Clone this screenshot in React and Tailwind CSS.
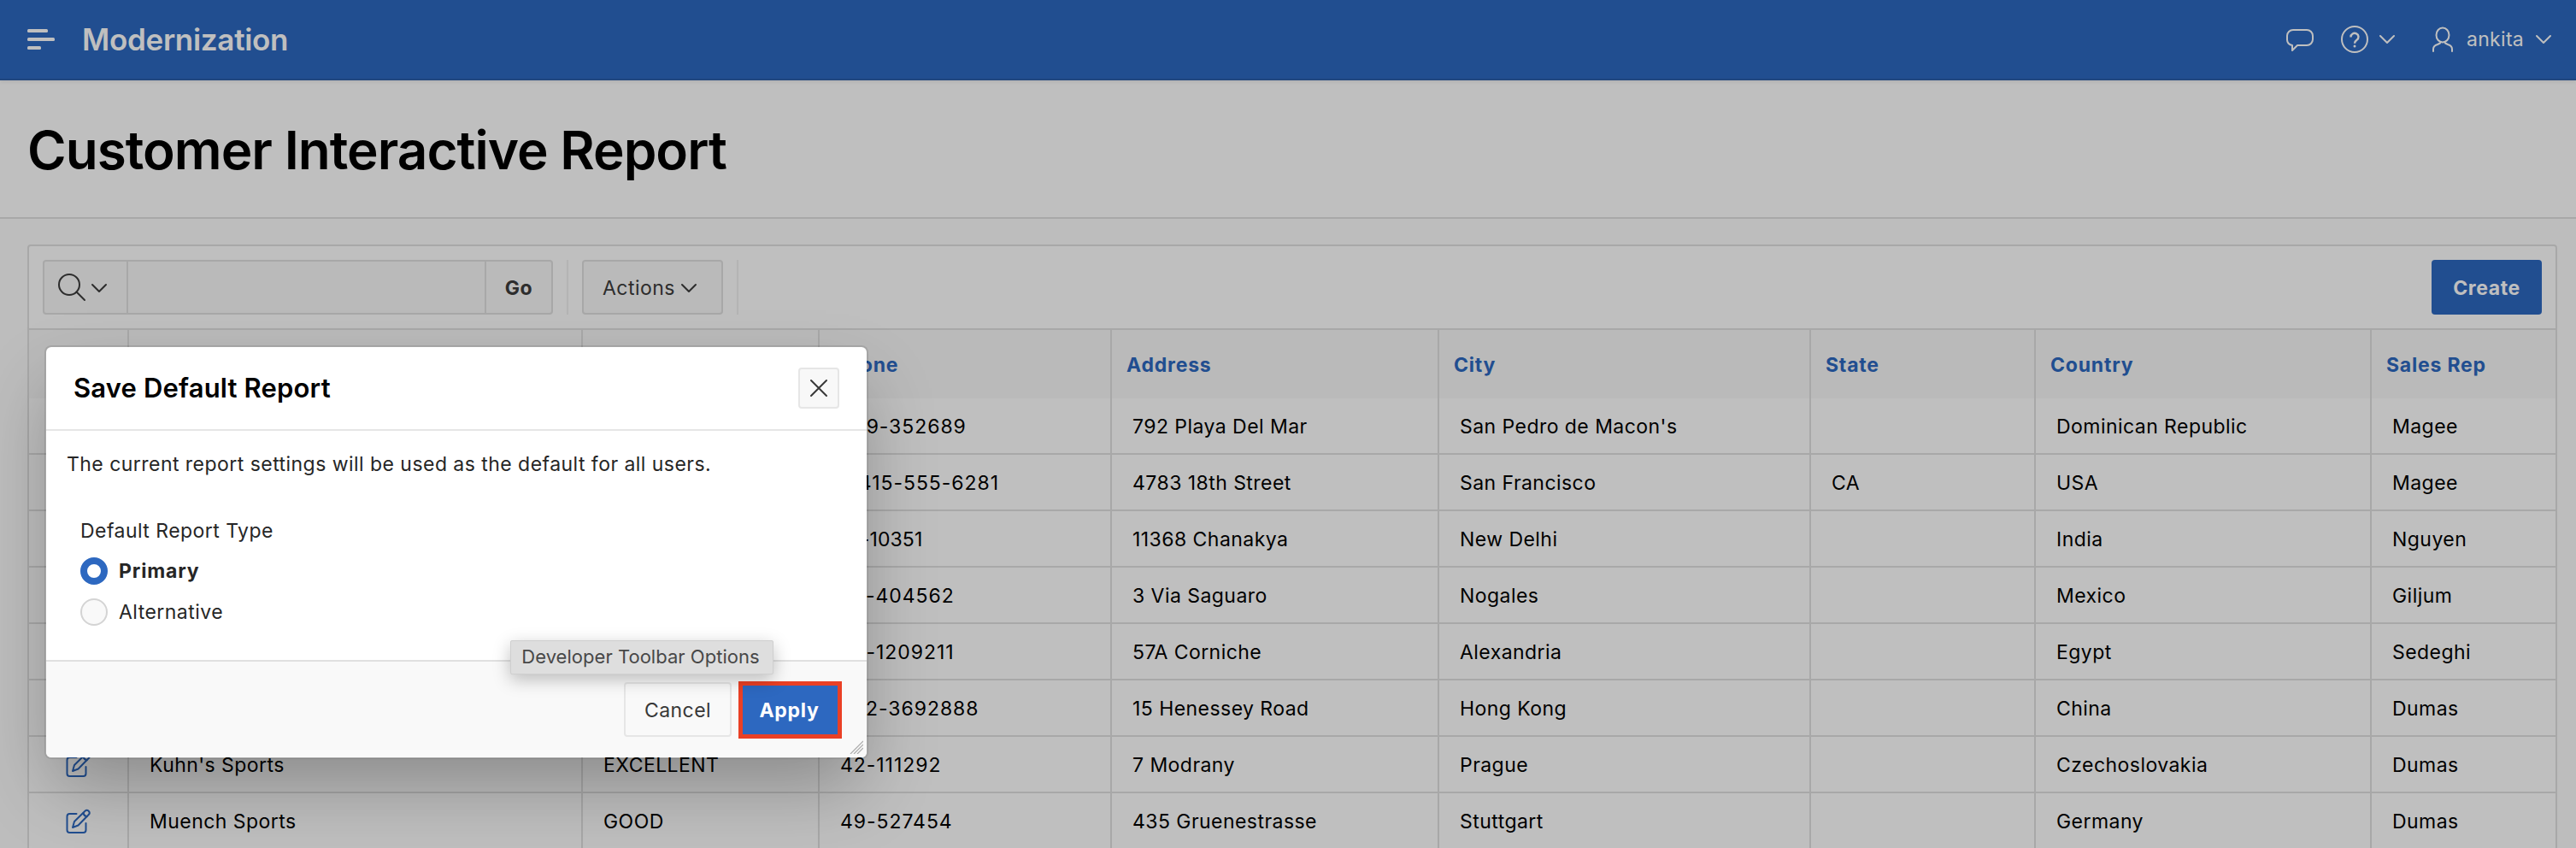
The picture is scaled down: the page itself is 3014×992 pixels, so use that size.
import React from "react";

const COLS = "grid grid-cols-[117px_531px_277px_342px_383px_435px_263px_393px_215px]";
const HEADS = ["", "", "", "Phone", "Address", "City", "State", "Country", "Sales Rep"];
const ROWS = [
  ["", "", "809-352689", "792 Playa Del Mar", "San Pedro de Macon's", "", "Dominican Republic", "Magee"],
  ["", "", "1-415-555-6281", "4783 18th Street", "San Francisco", "CA", "USA", "Magee"],
  ["", "", "91-10351", "11368 Chanakya", "New Delhi", "", "India", "Nguyen"],
  ["", "", "52-404562", "3 Via Saguaro", "Nogales", "", "Mexico", "Giljum"],
  ["", "", "20-1209211", "57A Corniche", "Alexandria", "", "Egypt", "Sedeghi"],
  ["", "", "852-3692888", "15 Henessey Road", "Hong Kong", "", "China", "Dumas"],
  ["Kuhn's Sports", "EXCELLENT", "42-111292", "7 Modrany", "Prague", "", "Czechoslovakia", "Dumas"],
  ["Muench Sports", "GOOD", "49-527454", "435 Gruenestrasse", "Stuttgart", "", "Germany", "Dumas"],
];

function tracking(row, col) {
  if (col !== 2) return "tracking-[0.45px]";
  return row === 2 ? "tracking-[0.1px]" : "tracking-[0.95px]";
}

function Chevron({ className }) {
  return (
    <svg className={className} width="20" height="12" viewBox="0 0 20 12" fill="none" stroke="currentColor" strokeWidth="2" strokeLinecap="round" strokeLinejoin="round">
      <path d="M2 2l8 8 8-8" />
    </svg>
  );
}

function EditIcon() {
  return (
    <svg width="32" height="32" viewBox="0 0 32 32" fill="none" stroke="currentColor" strokeWidth="2" strokeLinecap="round" strokeLinejoin="round">
      <path d="M14.500 7H6.500a3 3 0 0 0-3 3v16a3 3 0 0 0 3 3h16a3 3 0 0 0 3-3v-8" />
      <path d="M10 23l2-7L24.500 3.800a2.900 2.900 0 0 1 4.200 4.200L16.500 20.500z" />
      <path d="M22.500 6c.5 2.500 1.800 3.800 4.200 4.200" />
    </svg>
  );
}

export default function App() {
  return (
    <div className="relative h-[992px] w-[3014px] overflow-hidden bg-[#fdfdfd] font-['Inter',sans-serif] text-[23px] text-black">
      <header className="relative flex h-[94px] items-center border-b-2 border-[#2b5ea9] bg-[#2d68c0] text-white shadow-[0_2px_4px_rgba(0,0,0,0.08)]">
        <svg className="ml-8 shrink-0" width="32" height="24" viewBox="0 0 32 24" fill="currentColor">
          <rect width="24" height="4" rx="1.500" />
          <rect y="10" width="32" height="4" rx="1.500" />
          <rect y="20" width="16" height="4" rx="1.500" />
        </svg>
        <span className="ml-8 text-[35px] font-semibold leading-none tracking-[-0.3px]">Modernization</span>
        <div className="ml-auto flex items-center pr-[28px]">
          <svg width="34" height="28" viewBox="0 0 34 28" fill="none" stroke="currentColor" strokeWidth="2" strokeLinejoin="round">
            <path d="M9 3h16a7 7 0 0 1 7 7v4a7 7 0 0 1-7 7H14l-6 6v-6a6.500 6.500 0 0 1-6-7v-4a7 7 0 0 1 7-7z" />
          </svg>
          <svg className="ml-[30px]" width="34" height="34" viewBox="0 0 34 34" fill="none" stroke="currentColor" strokeWidth="2">
            <circle cx="17" cy="17" r="15" />
            <path d="M12.500 14.500v-.3a4.500 4.300 0 1 1 7 3.500c-1.700 1.200-2.500 1.800-2.500 4" strokeWidth="2.400" />
            <circle cx="17" cy="25" r="1.500" fill="currentColor" stroke="none" />
          </svg>
          <Chevron className="ml-[11px]" />
          <svg className="ml-[42px]" width="26" height="30" viewBox="0 0 26 30" fill="none" stroke="currentColor" strokeWidth="2" strokeLinecap="round">
            <ellipse cx="13" cy="10" rx="7.500" ry="8.500" />
            <path d="M2 29v-2.500c0-3 2-4.500 5-5.500l3-1.500M24 29v-2.500c0-3-2-4.500-5-5.500l-3-1.500" />
          </svg>
          <span className="ml-[15px] w-[67px] pt-px tracking-[0.3px]">ankita</span>
          <Chevron className="ml-[13px]" />
        </div>
      </header>

      <div className="flex h-[162px] items-center border-b-2 border-[#e0e0e0] bg-white pl-8 pt-[3px]">
        <h1 className="text-[62px] font-semibold leading-none tracking-[-0.98px]">Customer Interactive Report</h1>
      </div>

      <section className="ml-8 mt-[30px] h-[760px] w-[2960px] rounded-[4px] border-2 border-[#e0e0e0] bg-white">
        <div className="flex h-[98px] items-center border-b-2 border-[#e0e0e0] px-4 text-[#3c3c3c]">
          <div className="flex h-16 w-[597px] rounded-[4px] border-2 border-[#e0e0e0] bg-[#f8f8f8]">
            <div className="flex w-[98px] items-center border-r-2 border-[#e0e0e0] pl-4">
              <svg width="34" height="34" viewBox="0 0 34 34" fill="none" stroke="currentColor" strokeWidth="2" strokeLinecap="round">
                <circle cx="13" cy="14" r="12" />
                <path d="M21.500 22.500l9.500 9.500" />
              </svg>
              <Chevron className="ml-1 mt-[2px]" />
            </div>
            <div className="w-[419px] border-r-2 border-[#e0e0e0]" />
            <div className="flex flex-1 items-center justify-center pt-[2px] font-bold tracking-[0.5px]">Go</div>
          </div>
          <div className="ml-[16px] h-16 w-[2px] bg-[#f0f0f0]" />
          <div className="ml-[16px] flex h-16 w-[165px] items-center rounded-[4px] border-2 border-[#e0e0e0] bg-[#f8f8f8] pl-[22px]">
            <span className="w-[84px] pt-[2px] tracking-[0.45px]">Actions</span>
            <Chevron className="ml-[7px] mt-[2px]" />
          </div>
          <div className="ml-[16px] h-16 w-[2px] bg-[#f0f0f0]" />
          <div className="ml-auto flex h-16 w-[129px] items-center justify-center rounded-[4px] bg-[#2d68c0] pt-[2px] font-bold tracking-[0.6px] text-white">Create</div>
        </div>
        <div className={COLS + " h-20 bg-[#f8f8f8] font-bold tracking-[0.8px] text-[#2d68c0]"}>
          {HEADS.map((h, i) => (
            <div key={i} className="flex items-center border-r-2 border-[#e0e0e0] pl-[17px] pt-[2px] last:border-r-0">{h}</div>
          ))}
        </div>
        {ROWS.map((r, i) => (
          <div key={i} className={COLS + " h-[66px] border-b-2 border-[#e0e0e0]"}>
            <div className="flex items-center border-r-2 border-[#e0e0e0] pl-[41px] pt-px text-[#2d68c0]"><EditIcon /></div>
            {r.map((c, j) => (
              <div key={j} className={"flex items-center whitespace-nowrap border-r-2 border-[#e0e0e0] pl-6 pt-[2px] last:border-r-0 " + tracking(i, j)}>{c}</div>
            ))}
          </div>
        ))}
      </section>

      <div className="absolute inset-0 bg-black/25" />

      <div className="absolute left-[52px] top-[404px] flex h-[484px] w-[964px] flex-col rounded-[8px] border-2 border-black/10 bg-white bg-clip-padding tracking-[0.46px] text-[#262626] shadow-[0_40px_80px_-10px_rgba(0,0,0,0.28)]">
        <div className="flex h-[98px] items-center justify-between border-b-2 border-[#e6e6e6] pl-8 pr-8">
          <h2 className="pt-px text-[31px] font-semibold tracking-[0.16px] text-black">Save Default Report</h2>
          <div className="flex h-12 w-12 items-center justify-center rounded-[4px] border-2 border-[#e6e6e6] bg-[#f8f8f8]">
            <svg width="22" height="22" viewBox="0 0 22 22" stroke="#383838" strokeWidth="2" strokeLinecap="round">
              <path d="M2 2l18 18M20 2L2 20" />
            </svg>
          </div>
        </div>
        <div className="flex h-[268px] flex-col pt-[21px]">
          <p className="pl-6 leading-9">The current report settings will be used as the default for all users.</p>
          <p className="mt-[42px] pl-10 leading-9">Default Report Type</p>
          <div className="mt-[5px] flex h-12 items-center pl-10 font-bold tracking-[0.85px]">
            <span className="h-8 w-8 rounded-full border-8 border-[#2d68c0] bg-white" />
            <span className="ml-[13px] pt-px">Primary</span>
          </div>
          <div className="flex h-12 items-center pl-10">
            <span className="h-8 w-8 rounded-full border-2 border-[#d4d4d4] bg-[#f9f9f9]" />
            <span className="ml-[13px] pt-px">Alternative</span>
          </div>
        </div>
        <div className="flex flex-1 items-center justify-end rounded-b-[6px] border-t-2 border-[#e0e0e0] bg-[#f9f9f9] pr-[29px]">
          <div className="flex h-16 w-[126px] items-center justify-center rounded-[4px] border-2 border-[#e6e6e6] pt-[2px] text-[#383838]">Cancel</div>
          <div className="ml-2 flex h-[67px] w-[121px] items-center justify-center border-[5px] border-[#ea4025] bg-[#2d68c0] pr-[2px] pt-[2px] font-bold tracking-[0.7px] text-white">Apply</div>
        </div>
        <svg className="absolute bottom-1 right-1" width="16" height="16" viewBox="0 0 16 16" stroke="#aaa" strokeWidth="1.200">
          <path d="M1 16L16 1M5 16L16 5M9 16l7-7" />
        </svg>
      </div>
      <div className="absolute left-[597px] top-[749px] flex h-10 w-[308px] items-center justify-center whitespace-nowrap rounded-[2px] border border-[#cfcfcf] bg-[#dedede] pb-px pr-[3px] text-[22px] tracking-[0.03px] text-[#484848] shadow-[0_6px_20px_rgba(0,0,0,0.25)]">Developer Toolbar Options</div>
    </div>
  );
}
